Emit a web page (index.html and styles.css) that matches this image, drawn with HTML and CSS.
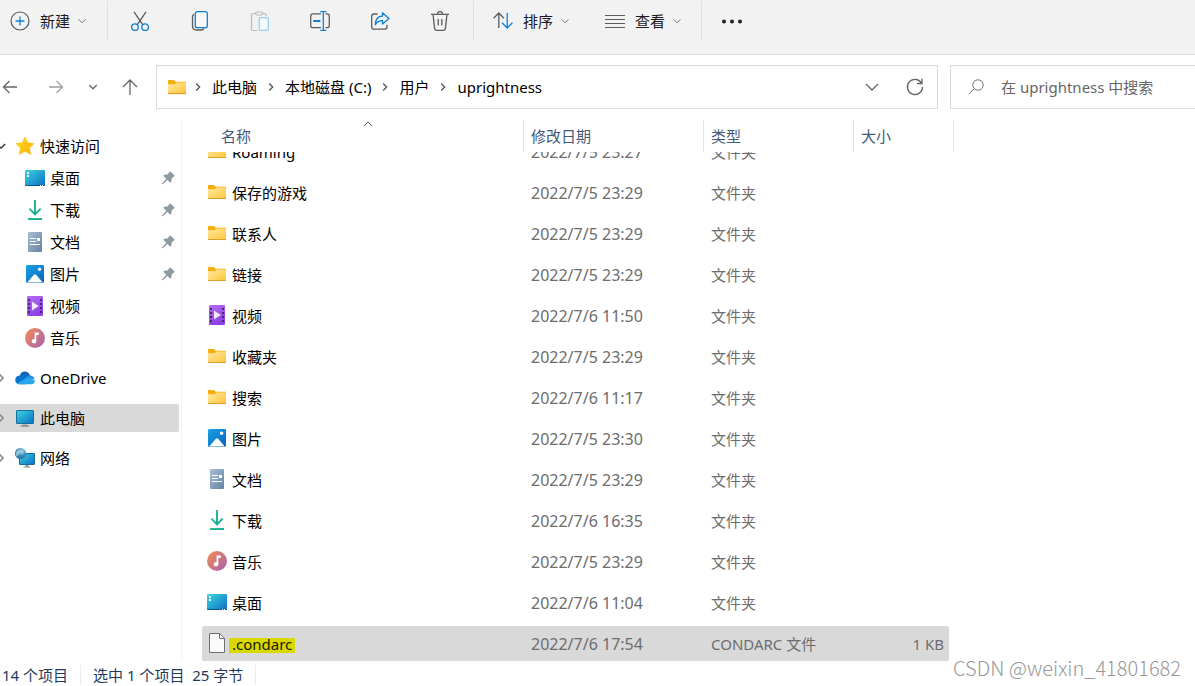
FILE: index.html
```
<!DOCTYPE html>
<html lang="zh-CN">
<head>
<meta charset="utf-8">
<meta name="viewport" content="width=device-width, initial-scale=1">
<title>uprightness</title>
<link rel="stylesheet" href="styles.css">
</head>
<body>
<svg class="sprite" aria-hidden="true">
  <defs>
    <linearGradient id="g-folder" x1="0" y1="0" x2="1" y2="1"><stop offset="0" stop-color="#ffe9a2"/><stop offset="1" stop-color="#fdc63a"/></linearGradient>
    <linearGradient id="g-screen" x1="0" y1="0" x2="1" y2="1"><stop offset="0" stop-color="#3bd5e0"/><stop offset="1" stop-color="#0b6fc4"/></linearGradient>
    <linearGradient id="g-down" x1="0" y1="0" x2="1" y2="1"><stop offset="0" stop-color="#2fcb85"/><stop offset="1" stop-color="#0e9f9a"/></linearGradient>
    <linearGradient id="g-doc" x1="0" y1="0" x2="1" y2="1"><stop offset="0" stop-color="#a9bed6"/><stop offset="1" stop-color="#6582a5"/></linearGradient>
    <linearGradient id="g-pic" x1="0" y1="0" x2="1" y2="1"><stop offset="0" stop-color="#1ba2e8"/><stop offset="1" stop-color="#0763b8"/></linearGradient>
    <linearGradient id="g-video" x1="0" y1="0" x2="0.4" y2="1"><stop offset="0" stop-color="#b56cf2"/><stop offset="1" stop-color="#8b41e6"/></linearGradient>
    <linearGradient id="g-music" x1="0" y1="0.1" x2="1" y2="0.9"><stop offset="0" stop-color="#f58b55"/><stop offset="1" stop-color="#a962b0"/></linearGradient>
    <linearGradient id="g-star" x1="0" y1="0" x2="1" y2="1"><stop offset="0" stop-color="#ffdc1a"/><stop offset="1" stop-color="#fbac0c"/></linearGradient>
    <radialGradient id="g-globe" cx="0.6" cy="0.3" r="0.8"><stop offset="0" stop-color="#b7dceb"/><stop offset="0.5" stop-color="#3d8fb8"/><stop offset="1" stop-color="#22668f"/></radialGradient>
  </defs>
  <symbol id="folder" viewBox="0 0 20 20">
    <path d="M1 3.600q0-.6.6-.6h5.200q.5 0 .8.400l1 1.400H19v4H1z" fill="#f5ae12"/>
    <path d="M1 7.200h6.800l1.400-1.600H19v11H1z" fill="url(#g-folder)"/>
    <path d="M1 16.500h18" stroke="#dda12b"/>
  </symbol>
  <symbol id="desktop" viewBox="0 0 20 20">
    <rect y="2" width="20" height="16" rx="1" fill="url(#g-screen)"/>
    <path d="M0 17h20q0 1-1 1H1q-1 0-1-1z" fill="#0b5585"/>
    <path d="M2 4h2v2H2zM2 7h2v2H2zM15 17h1v1h-1zM17 17h1v1h-1z" fill="#fff"/>
  </symbol>
  <symbol id="download" viewBox="0 0 20 20">
    <path d="M9 0h2v12l4-4 1.300 1.300L10 15.700 3.700 9.300 5 8l4 4z" fill="url(#g-down)"/>
    <path d="M3 18h14v2H3z" fill="url(#g-down)"/>
  </symbol>
  <symbol id="document" viewBox="0 0 20 20">
    <rect x="3" width="14" height="20" rx="1" fill="url(#g-doc)"/>
    <path d="M5 6.500h6M5 9.500h6M5 12.500h10" stroke="#fff"/>
    <path d="M12 6h3v3h-3z" fill="#fff"/>
  </symbol>
  <symbol id="picture" viewBox="0 0 20 20">
    <rect x="1" y="1" width="18" height="18" rx="1.400" fill="url(#g-pic)"/>
    <path d="M2.200 18.400l6.700-7.700q1.100-1.100 2.200 0l6.700 7.700z" fill="#fff"/>
    <circle cx="14.600" cy="5.200" r="1.700" fill="#fff"/>
  </symbol>
  <symbol id="video" viewBox="0 0 20 20">
    <rect x="2" width="16" height="20" rx="1.200" fill="url(#g-video)"/>
    <path d="M3 3h2v2H3zM3 7h2v2H3zM3 11h2v2H3zM3 15h2v2H3zM15 3h2v2h-2zM15 7h2v2h-2zM15 11h2v2h-2zM15 15h2v2h-2z" fill="#4a2770"/>
    <path d="M7 5.500v9l6.800-4.500z" fill="#f3eafd"/>
  </symbol>
  <symbol id="music" viewBox="0 0 20 20">
    <circle cx="10" cy="10" r="10" fill="url(#g-music)"/>
    <circle cx="9" cy="13.300" r="2.200" fill="#fff"/>
    <path d="M9.600 4.500h4.200v2.600h-2.500v6.200H9.600z" fill="#fff"/>
  </symbol>
  <symbol id="file" viewBox="0 0 20 20">
    <path d="M2.500.5h10.200l4.800 4.800v14.200h-15z" fill="#fafafa" stroke="#6f6f6f"/>
    <path d="M12.500.5v5h5" fill="none" stroke="#6f6f6f"/>
  </symbol>
  <symbol id="star" viewBox="0 0 20 20">
    <path d="M10 1l2.800 5.800 6.300.8-4.600 4.400 1.200 6.400L10 15.300l-5.700 3.100L5.500 12 .9 7.600l6.300-.8z" fill="url(#g-star)" stroke="#fbc011" stroke-width=".6" stroke-linejoin="round"/>
  </symbol>
  <symbol id="cloud" viewBox="0 0 20 20">
    <path d="M4.800 7.500C6 2.800 12.600 1.600 15.200 7.500L9 12z" fill="#0a63bd"/>
    <path d="M4.500 7.400Q7 6.500 9.200 8l5.800 4-4 4.300H4C-1.200 16-1 7.800 4.500 7.400z" fill="#0874d1"/>
    <path d="M9.500 10.500Q12 7 15.500 7.400 19 8 19.400 11z" fill="#1490df"/>
    <path d="M1.800 15.600L11 10.300q2-1 4 0L19.600 12q.9 4-3.200 4.300H4.200q-1.500 0-2.400-.7z" fill="#29a7eb"/>
  </symbol>
  <symbol id="pc" viewBox="0 0 20 20">
    <rect x="1.500" y="2.500" width="17" height="13" rx=".5" fill="url(#g-screen)" stroke="#156f9c"/>
    <path d="M8 16h4v1.500H8z" fill="#aab4bb"/><path d="M6 17.500h8v1H6z" fill="#556570"/>
  </symbol>
  <symbol id="network" viewBox="0 0 20 20">
    <rect x="4.500" y="5.500" width="15" height="11" rx=".5" fill="url(#g-screen)" stroke="#156f9c"/>
    <path d="M10.500 17h3v1.500h-3zM8.500 18.500h7v1h-7z" fill="#8c979e"/>
    <circle cx="5.500" cy="5.500" r="5.500" fill="url(#g-globe)"/>
    <path d="M1 4q2-2 4-2l1 2-2 2-2 3Q.5 7 1 4z" fill="#a4cfe0" opacity=".8"/>
  </symbol>
  <symbol id="pin" viewBox="0 0 14 14">
    <path d="M8.400.9q.8-.8 1.600 0l3.200 3.200q.8.800-.2 1.500L10.900 7.200l-.8 3.900q-.3 1-1.100.2L6.400 8.900 1.800 13.300H.9v-.9l4.400-4.700-2.600-2.500q-.8-.8.200-1.200L6.800 3.200z" fill="#8f9ba3"/>
  </symbol>
  <symbol id="down" viewBox="0 0 10 10"><path d="M1.500 3.300L5 6.800l3.500-3.500" fill="none" stroke="currentColor"/></symbol>
  <symbol id="right" viewBox="0 0 10 10"><path d="M3.200 1.500L6.700 5 3.200 8.500" fill="none" stroke="currentColor" stroke-width="1.300"/></symbol>
</svg>

<div class="window">
  <header class="toolbar">
    <button class="tool tool-new" type="button">
      <svg class="icon" viewBox="0 0 20 20"><circle cx="10" cy="10" r="9" fill="none" stroke="#5c5c5c" stroke-width="1.200"/><path d="M10 5.500v9M5.500 10h9" stroke="#0f7fd6" stroke-width="1.300"/></svg>
      新建<svg class="caret"><use href="#down"/></svg>
    </button>
    <div class="tool-group">
      <button class="tool" type="button" aria-label="剪切"><svg class="icon" viewBox="0 0 20 20" fill="none" stroke-width="1.300"><path d="M4 .8l9 13.400M16 .8L7 14.200" stroke="#5c5c5c"/><circle cx="4.900" cy="16.200" r="3.300" stroke="#0f7fd6"/><circle cx="15.100" cy="16.200" r="3.300" stroke="#0f7fd6"/></svg></button>
      <button class="tool" type="button" aria-label="复制"><svg class="icon" viewBox="0 0 20 20" fill="none" stroke-width="1.300"><path d="M4 3.500q-1.500.3-1.500 2.500v9q0 4 4 4h5q2 0 2.500-1.500" stroke="#5c5c5c"/><rect x="5.300" y=".7" width="12" height="16" rx="2" fill="#f8f8f8" stroke="#0f7fd6"/></svg></button>
      <button class="tool" type="button" aria-label="粘贴" disabled><svg class="icon" viewBox="0 0 20 20" fill="none" stroke-width="1.200"><path d="M6 2.500H3q-1.500 0-1.500 1.500v14q0 1.500 1.500 1.500h4.500M12 2.500h2.500Q16 2.500 16 4v1" stroke="#bbb"/><rect x="5.600" y="1" width="7" height="3" rx="1.500" stroke="#bbb"/><rect x="9.200" y="6.600" width="9.200" height="12.800" rx="1.500" fill="#f3f8fb" stroke="#9ccbed"/></svg></button>
      <button class="tool" type="button" aria-label="重命名"><svg class="icon" viewBox="0 0 20 20" fill="none" stroke-width="1.300"><path d="M11 2.800H3Q.7 2.800.7 5v9.500q0 2.200 2.300 2.200h8M15.500 2.800H17q2.300 0 2.300 2.200v9.500q0 2.200-2.300 2.200h-1.500" stroke="#5c5c5c"/><path d="M13.300.7v18.600M10.300.7h6M10.300 19.300h6" stroke="#0f7fd6"/><path d="M3.200 10h7.200" stroke="#0f7fd6" stroke-width="2"/></svg></button>
      <button class="tool" type="button" aria-label="共享"><svg class="icon" viewBox="0 0 20 20" fill="none" stroke-width="1.300" stroke-linejoin="round"><path d="M7.500 3H4Q1.700 3 1.700 5.300v10.400Q1.700 18.200 4 18.200h10.500q2.500 0 2.500-2.500v-2" stroke="#5c5c5c"/><path d="M12.500 1.800l6.400 5.600-6.400 5.600V9.700q-4.500-.1-7.200 4Q5.600 5.300 12.500 5z" stroke="#0f7fd6" fill="#f5f9fc"/></svg></button>
      <button class="tool" type="button" aria-label="删除"><svg class="icon" viewBox="0 0 20 20" fill="none" stroke="#5c5c5c" stroke-width="1.300"><path d="M1 3.300h18M3 3.300l1.600 14q.3 2 2 2h6.800q1.700 0 2-2l1.600-14M7.500 3Q7.500.7 10 .7T12.500 3M8.200 8v6.500M11.800 8v6.500"/></svg></button>
    </div>
    <div class="tool-group tool-group-wide">
      <button class="tool" type="button"><svg class="icon" viewBox="0 0 20 20" fill="none" stroke-width="1.300"><path d="M5.800 17V2M.6 7.200L5.800 2 11 7.200" stroke="#5c5c5c"/><path d="M14.200 2v15M9 11.800l5.200 5.200 5.200-5.200" stroke="#0f7fd6"/></svg>排序<svg class="caret"><use href="#down"/></svg></button>
      <button class="tool" type="button"><svg class="icon" viewBox="0 0 20 20"><path d="M0 4.500h20M0 8.500h20M0 12.500h20M0 16.500h20" stroke="#5c5c5c"/></svg>查看<svg class="caret"><use href="#down"/></svg></button>
    </div>
    <button class="tool tool-more" type="button" aria-label="更多"><svg class="icon" viewBox="0 0 20 20" fill="#1f1f1f"><circle cx="2" cy="10.500" r="2"/><circle cx="10" cy="10.500" r="2"/><circle cx="18" cy="10.500" r="2"/></svg></button>
  </header>

  <nav class="navbar">
    <div class="history">
      <button type="button" aria-label="后退"><svg viewBox="0 0 16 16"><path d="M15 8H1.500M7.500 2l-6 6 6 6" /></svg></button>
      <button class="faded" type="button" aria-label="前进"><svg viewBox="0 0 16 16"><path d="M1 8h13.500M8.500 2l6 6-6 6"/></svg></button>
      <button class="recent" type="button" aria-label="最近"><svg viewBox="0 0 10 10"><path d="M1.200 3l3.800 3.800L8.800 3"/></svg></button>
      <button type="button" aria-label="向上"><svg viewBox="0 0 16 16"><path d="M8 16V1M1 8l7-7 7 7"/></svg></button>
    </div>
    <div class="address">
      <svg class="icon"><use href="#folder"/></svg>
      <svg class="sep"><use href="#right"/></svg><button type="button">此电脑</button>
      <svg class="sep"><use href="#right"/></svg><button type="button">本地磁盘 (C:)</button>
      <svg class="sep"><use href="#right"/></svg><button type="button">用户</button>
      <svg class="sep"><use href="#right"/></svg><button type="button">uprightness</button>
      <div class="address-actions">
        <button type="button" aria-label="展开"><svg viewBox="0 0 20 20"><path d="M4 7l6 6 6-6"/></svg></button>
        <button type="button" aria-label="刷新"><svg viewBox="0 0 20 20"><path d="M16.400 5.800A7.600 7.600 0 1 0 17.600 10M17 1.500v5h-5"/></svg></button>
      </div>
    </div>
    <label class="search">
      <svg viewBox="0 0 16 16"><circle cx="10" cy="6" r="5.200"/><path d="M6.300 9.700L.6 15.400"/></svg>
      <input type="search" placeholder="在 uprightness 中搜索" aria-label="在 uprightness 中搜索">
    </label>
  </nav>

  <div class="content">
    <aside class="sidebar">
      <ul class="tree">
        <li>
          <a class="node" href="#"><svg class="twist open"><use href="#down"/></svg><svg class="icon"><use href="#star"/></svg>快速访问</a>
          <ul class="children">
            <li><a class="node" href="#"><svg class="icon"><use href="#desktop"/></svg>桌面<svg class="pin"><use href="#pin"/></svg></a></li>
            <li><a class="node" href="#"><svg class="icon"><use href="#download"/></svg>下载<svg class="pin"><use href="#pin"/></svg></a></li>
            <li><a class="node" href="#"><svg class="icon"><use href="#document"/></svg>文档<svg class="pin"><use href="#pin"/></svg></a></li>
            <li><a class="node" href="#"><svg class="icon"><use href="#picture"/></svg>图片<svg class="pin"><use href="#pin"/></svg></a></li>
            <li><a class="node" href="#"><svg class="icon"><use href="#video"/></svg>视频</a></li>
            <li><a class="node" href="#"><svg class="icon"><use href="#music"/></svg>音乐</a></li>
          </ul>
        </li>
        <li><a class="node" href="#"><svg class="twist"><use href="#right"/></svg><svg class="icon"><use href="#cloud"/></svg>OneDrive</a></li>
        <li><a class="node selected" href="#"><svg class="twist"><use href="#right"/></svg><svg class="icon"><use href="#pc"/></svg>此电脑</a></li>
        <li><a class="node" href="#"><svg class="twist"><use href="#right"/></svg><svg class="icon"><use href="#network"/></svg>网络</a></li>
      </ul>
    </aside>

    <main class="files">
      <table>
        <thead>
          <tr>
            <th scope="col">名称<svg class="sorted" viewBox="0 0 10 6"><path d="M.8 5.200L5 1l4.200 4.200"/></svg></th>
            <th scope="col">修改日期</th><th scope="col">类型</th><th scope="col">大小</th>
          </tr>
        </thead>
        <tbody>
          <tr><td><svg class="icon"><use href="#folder"/></svg>Roaming</td><td>2022/7/5 23:27</td><td>文件夹</td><td></td></tr>
          <tr><td><svg class="icon"><use href="#folder"/></svg>保存的游戏</td><td>2022/7/5 23:29</td><td>文件夹</td><td></td></tr>
          <tr><td><svg class="icon"><use href="#folder"/></svg>联系人</td><td>2022/7/5 23:29</td><td>文件夹</td><td></td></tr>
          <tr><td><svg class="icon"><use href="#folder"/></svg>链接</td><td>2022/7/5 23:29</td><td>文件夹</td><td></td></tr>
          <tr><td><svg class="icon"><use href="#video"/></svg>视频</td><td>2022/7/6 11:50</td><td>文件夹</td><td></td></tr>
          <tr><td><svg class="icon"><use href="#folder"/></svg>收藏夹</td><td>2022/7/5 23:29</td><td>文件夹</td><td></td></tr>
          <tr><td><svg class="icon"><use href="#folder"/></svg>搜索</td><td>2022/7/6 11:17</td><td>文件夹</td><td></td></tr>
          <tr><td><svg class="icon"><use href="#picture"/></svg>图片</td><td>2022/7/5 23:30</td><td>文件夹</td><td></td></tr>
          <tr><td><svg class="icon"><use href="#document"/></svg>文档</td><td>2022/7/5 23:29</td><td>文件夹</td><td></td></tr>
          <tr><td><svg class="icon"><use href="#download"/></svg>下载</td><td>2022/7/6 16:35</td><td>文件夹</td><td></td></tr>
          <tr><td><svg class="icon"><use href="#music"/></svg>音乐</td><td>2022/7/5 23:29</td><td>文件夹</td><td></td></tr>
          <tr><td><svg class="icon"><use href="#desktop"/></svg>桌面</td><td>2022/7/6 11:04</td><td>文件夹</td><td></td></tr>
          <tr class="selected"><td><svg class="icon"><use href="#file"/></svg><mark>.condarc</mark></td><td>2022/7/6 17:54</td><td>CONDARC 文件</td><td>1 KB</td></tr>
        </tbody>
      </table>
    </main>
  </div>

  <footer class="status">
    <span>14 个项目</span>
    <span>选中 1 个项目&nbsp; 25 字节</span>
  </footer>
  <div class="watermark">CSDN @weixin_41801682</div>
</div>
</body>
</html>
```
FILE: styles.css
```
* { box-sizing: border-box; }

body {
  margin: 0;
  background: #fff;
  color: #000;
  font: 15px/20px "Noto Sans", "Noto Sans CJK SC", sans-serif;
}

button {
  padding: 0;
  border: 0;
  background: none;
  color: inherit;
  font: inherit;
}

svg { flex: none; display: block; }
ul { margin: 0; padding: 0; list-style: none; }

.sprite { position: absolute; width: 0; height: 0; }
.icon { width: 20px; height: 20px; }

.window {
  position: relative;
  display: flex;
  flex-direction: column;
  min-height: 100vh;
  overflow: hidden;
}

/* Command bar */
.toolbar {
  display: flex;
  align-items: flex-start;
  height: 55px;
  padding: 1px 0 0 10px;
  border-bottom: 1px solid #dcdcdc;
  background: #f2f2f2;
  color: #1b1b1b;
}

.tool {
  display: flex;
  align-items: center;
  gap: 10px;
  height: 40px;
}

.tool .caret { width: 10px; height: 10px; margin-left: -3px; color: #777; }
.tool-new { padding-right: 20px; }

.tool-group {
  display: flex;
  gap: 40px;
  padding: 0 23px 0 22px;
  border-left: 1px solid #e0e0e0;
}

.tool-group-wide { gap: 35px; padding: 0 19px; }
.tool-more { padding-left: 20px; border-left: 1px solid #e0e0e0; }

/* Navigation row */
.navbar {
  display: flex;
  align-items: center;
  height: 64px;
}

.navbar svg { fill: none; stroke: #666; stroke-width: 1.3; }
.navbar svg.icon { stroke: none; }

.history {
  display: flex;
  align-items: center;
  width: 156px;
  gap: 30px;
  padding-left: 2px;
}

.history svg { width: 16px; height: 16px; }
.history .faded svg { stroke: #a0a0a0; }
.history .recent { margin: 0 -6px; }
.history .recent svg { width: 10px; height: 10px; }

.address {
  display: flex;
  flex: 1;
  align-items: center;
  height: 44px;
  padding: 0 12px 1px 10px;
  border: 1px solid #d9d9d9;
}

.address .sep { width: 10px; height: 10px; margin: 0 9px; color: #555; }
.address .icon + .sep { margin-left: 6px; }
.address-actions { display: flex; gap: 23px; margin-left: auto; }
.address-actions svg { width: 20px; height: 20px; }

.search {
  display: flex;
  align-items: center;
  gap: 17px;
  width: 245px;
  height: 44px;
  margin-left: 12px;
  padding-left: 17px;
  border: 1px solid #d9d9d9;
  border-right: 0;
}

.search svg { width: 16px; height: 16px; stroke: #777; stroke-width: 1; }

.search input {
  flex: 1;
  min-width: 0;
  padding: 0;
  border: 0;
  outline: 0;
  background: none;
  color: #666;
  font: inherit;
}

.search input::placeholder { color: #666; opacity: 1; }

/* Folder tree */
.content { display: flex; flex: 1; }

.sidebar {
  width: 182px;
  padding: 13px 2px 0 0;
  border-right: 1px solid #f2f2f2;
}

.tree { display: grid; gap: 12px; }
.children { display: grid; gap: 4px; padding: 4px 0 0 25px; }

.node {
  display: flex;
  align-items: center;
  gap: 5px;
  height: 28px;
  padding-right: 4px;
  color: inherit;
  text-decoration: none;
}

.node.selected { border-radius: 0 2px 2px 0; background: #d9d9d9; }
.twist { width: 12px; height: 12px; margin: 0 3px 0 -5px; color: #8a8a8a; }
.twist.open { color: #222; }
.pin { width: 14px; height: 14px; margin-left: auto; }

/* File list */
.files { flex: 1; padding: 1px 0 0 20px; }
.files table, .files thead, .files tbody { display: block; }
.files tbody { overflow: hidden; }

.files tr {
  display: grid;
  grid-template-columns: 321px 180px 150px 96px;
  width: 747px;
}

.files thead tr { grid-template-columns: 322px 180px 150px 100px; width: 752px; }
.files tbody tr { height: 35px; margin-bottom: 6px; }
.files tbody tr:first-child { margin-top: -18px; }
.files tbody tr:last-child { margin-bottom: 0; }

.files th {
  height: 32px;
  padding: 6px 0 0 7px;
  border-right: 1px solid #e2e2e2;
  color: #44597a;
  font-weight: 400;
  text-align: left;
}

.files th:first-child { position: relative; padding-left: 19px; }

.sorted {
  position: absolute;
  top: 1px;
  left: 161px;
  width: 10px;
  height: 6px;
  fill: none;
  stroke: #666;
}

.files td {
  display: flex;
  align-items: center;
  padding: 0 5px 0 8px;
  color: #6d6d6d;
}

.files td:first-child { gap: 5px; padding-left: 5px; color: #000; }
.files td .icon { margin-bottom: 2px; }
.files td:nth-child(2) { font-size: 16px; }
.files td:last-child { justify-content: flex-end; }
.files .selected { border-radius: 2px; background: #d9d9d9; }

mark {
  margin-left: -3px;
  padding: 0 3px;
  background: linear-gradient(transparent 3px, #d9d900 3px);
  line-height: 18px;
  color: #1a1a00;
}

/* Status bar */
.status {
  display: flex;
  height: 25px;
  padding: 4px 0 0 2px;
  color: #1e395b;
}

.status span {
  height: 20px;
  margin-right: 12px;
  padding-right: 12px;
  border-right: 1px solid #ececec;
}

.watermark {
  position: absolute;
  right: 14px;
  bottom: 4px;
  color: #999;
  font: 300 20px/28px "Noto Sans CJK SC", sans-serif;
}
```
